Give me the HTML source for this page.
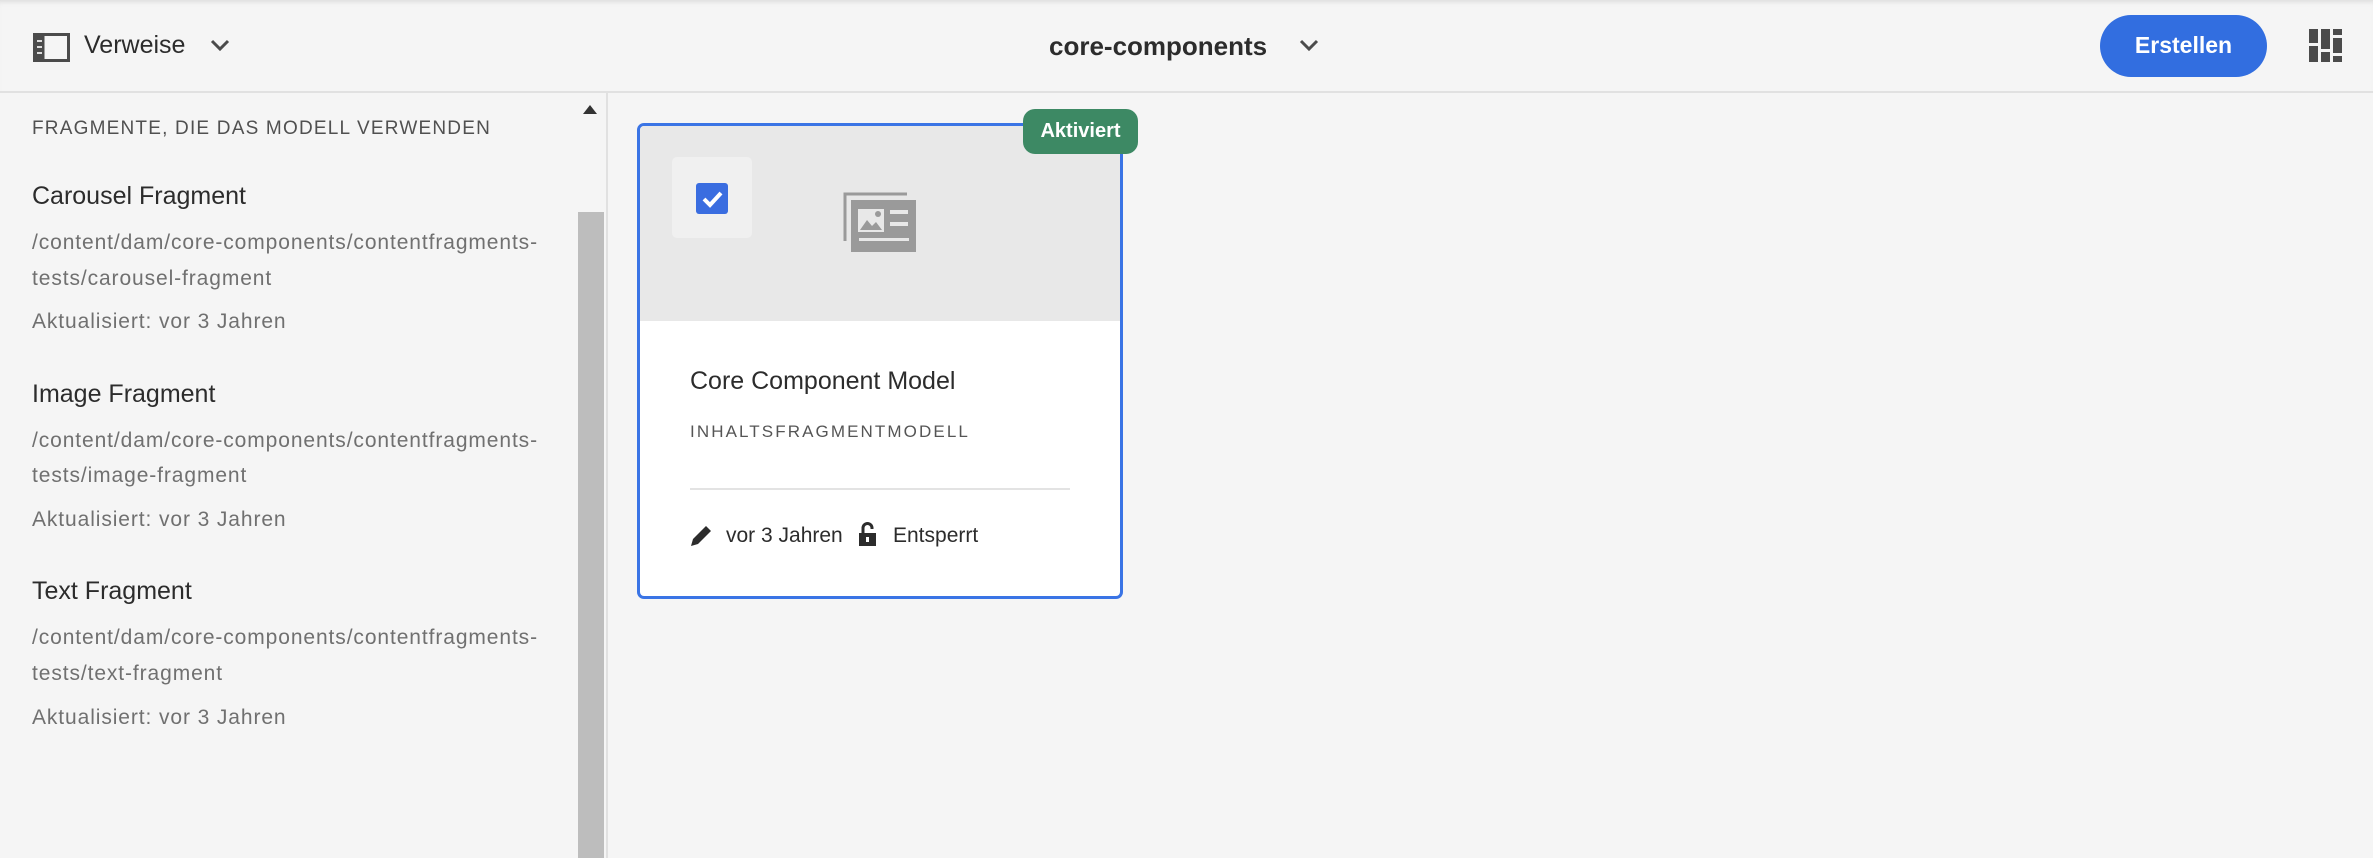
<!DOCTYPE html>
<html><head><meta charset="utf-8"><style>
*{margin:0;padding:0;box-sizing:border-box}
body{width:2373px;height:858px;background:#f5f5f5;font-family:"Liberation Sans",sans-serif;color:#2c2c2c;position:relative;overflow:hidden}
.abs{position:absolute;white-space:nowrap}
#hdr{position:absolute;left:0;top:0;width:2373px;height:93px;background:#f5f5f5;border-bottom:2px solid #e1e1e1;box-shadow:inset 0 5px 5px -3px #ddd}
#side{position:absolute;left:0;top:93px;width:608px;height:765px;border-right:2px solid #e1e1e1}
.h{font-size:19px;letter-spacing:1.2px;color:#505050}
.t{font-size:25px;color:#2c2c2c}
.p{font-size:21px;letter-spacing:0.9px;color:#707070}
</style></head><body>
<div id="hdr"></div>
<svg class="abs" style="left:33px;top:33px" width="37" height="29" viewBox="0 0 37 29"><rect x="1.5" y="1.5" width="34" height="26" fill="none" stroke="#4b4b4b" stroke-width="3"/><rect x="1.5" y="1.5" width="10" height="26" fill="#4b4b4b"/><rect x="4" y="7" width="5" height="2" fill="#ddd"/><rect x="4" y="13" width="5" height="2" fill="#ddd"/><rect x="4" y="19" width="5" height="2" fill="#ddd"/></svg>
<div class="abs" style="left:84px;top:31px;font-size:25px;color:#2c2c2c">Verweise</div>
<svg class="abs" style="left:210px;top:39px" width="20" height="14" viewBox="0 0 20 14"><path d="M2 2l8 8 8-8" fill="none" stroke="#4b4b4b" stroke-width="3"/></svg>
<div class="abs" style="left:1049px;top:31px;font-size:26px;font-weight:bold;color:#2c2c2c">core-components</div>
<svg class="abs" style="left:1299px;top:39px" width="20" height="14" viewBox="0 0 20 14"><path d="M2 2l8 8 8-8" fill="none" stroke="#4b4b4b" stroke-width="3"/></svg>
<div class="abs" style="left:2100px;top:15px;width:167px;height:62px;border-radius:31px;background:#326ee0;color:#fff;font-weight:bold;font-size:23px;text-align:center;line-height:60px">Erstellen</div>
<svg class="abs" style="left:2309px;top:29px" width="33" height="33" viewBox="0 0 33 33" fill="#4b4b4b"><rect x="0" y="0" width="9" height="14"/><rect x="0" y="17" width="9" height="16"/><rect x="12" y="0" width="9" height="20"/><rect x="12" y="23" width="9" height="10"/><rect x="24" y="0" width="9" height="6"/><rect x="24" y="9" width="9" height="15"/><rect x="24" y="27" width="9" height="6"/></svg>
<div id="side"></div>
<div class="abs" style="left:578px;top:212px;width:26px;height:646px;background:#bdbdbd"></div>
<svg class="abs" style="left:583px;top:105px" width="14" height="9"><path d="M0 9L7 0 14 9z" fill="#333"/></svg>
<div class="abs h" style="left:32px;top:118px">FRAGMENTE, DIE DAS MODELL VERWENDEN</div>
<div class="abs t" style="left:32px;top:182px">Carousel Fragment</div>
<div class="abs p" style="left:32px;top:231px">/content/dam/core-components/contentfragments-</div>
<div class="abs p" style="left:32px;top:267px">tests/carousel-fragment</div>
<div class="abs p" style="left:32px;top:310px">Aktualisiert: vor 3 Jahren</div>
<div class="abs t" style="left:32px;top:380px">Image Fragment</div>
<div class="abs p" style="left:32px;top:429px">/content/dam/core-components/contentfragments-</div>
<div class="abs p" style="left:32px;top:464px">tests/image-fragment</div>
<div class="abs p" style="left:32px;top:508px">Aktualisiert: vor 3 Jahren</div>
<div class="abs t" style="left:32px;top:577px">Text Fragment</div>
<div class="abs p" style="left:32px;top:626px">/content/dam/core-components/contentfragments-</div>
<div class="abs p" style="left:32px;top:662px">tests/text-fragment</div>
<div class="abs p" style="left:32px;top:706px">Aktualisiert: vor 3 Jahren</div>

<div class="abs" style="left:637px;top:123px;width:486px;height:476px;border:3px solid #3a74e5;border-radius:7px;background:#fff;overflow:hidden">
 <div style="position:absolute;left:0;top:0;width:480px;height:195px;background:#e8e8e8"></div>
</div>
<div class="abs" style="left:672px;top:157px;width:80px;height:81px;background:#f0f0f0;border-radius:5px"></div>
<svg class="abs" style="left:696px;top:183px" width="32" height="31" viewBox="0 0 32 31"><rect width="32" height="31" rx="3" fill="#3a6de0"/><path d="M8 16l6 6 11-12" fill="none" stroke="#fff" stroke-width="4"/></svg>
<svg class="abs" style="left:843px;top:192px" width="73" height="60" viewBox="0 0 73 60"><path d="M2 49V2h62" fill="none" stroke="#9a9a9a" stroke-width="3"/><rect x="8" y="8" width="65" height="52" fill="#9a9a9a"/><rect x="15" y="17" width="26" height="23" fill="#e8e8e8"/><path d="M17 38l7-10 5 6 4-4 6 8z" fill="#9a9a9a"/><circle cx="35" cy="22" r="3" fill="#9a9a9a"/><rect x="47" y="18" width="18" height="4" fill="#e8e8e8"/><rect x="47" y="30" width="18" height="4" fill="#e8e8e8"/><rect x="16" y="46" width="50" height="3" fill="#e8e8e8"/></svg>
<div class="abs" style="left:1023px;top:109px;width:115px;height:45px;border-radius:12px;background:#3d8964;color:#fff;font-weight:bold;font-size:20px;text-align:center;line-height:45px">Aktiviert</div>
<div class="abs" style="left:690px;top:367px;font-size:25px;color:#2c2c2c">Core Component Model</div>
<div class="abs" style="left:690px;top:422px;font-size:17px;letter-spacing:2.1px;color:#555">INHALTSFRAGMENTMODELL</div>
<div class="abs" style="left:690px;top:488px;width:380px;height:2px;background:#e3e3e3"></div>
<svg class="abs" style="left:691px;top:525px" width="21" height="21" viewBox="0 0 21 21"><path d="M0 21l2-7L15 1l5 5L7 19z" fill="#2c2c2c"/></svg>
<div class="abs" style="left:726px;top:524px;font-size:21px;color:#2c2c2c">vor 3 Jahren</div>
<svg class="abs" style="left:858px;top:522px" width="19" height="25" viewBox="0 0 19 25"><path d="M5 11V6a4.5 4.5 0 0 1 9 0v1" fill="none" stroke="#2c2c2c" stroke-width="3"/><rect x="1" y="11" width="17" height="13" fill="#2c2c2c"/><rect x="8" y="15" width="3" height="5" fill="#fff"/></svg>
<div class="abs" style="left:893px;top:524px;font-size:21px;color:#2c2c2c">Entsperrt</div>
</body></html>
